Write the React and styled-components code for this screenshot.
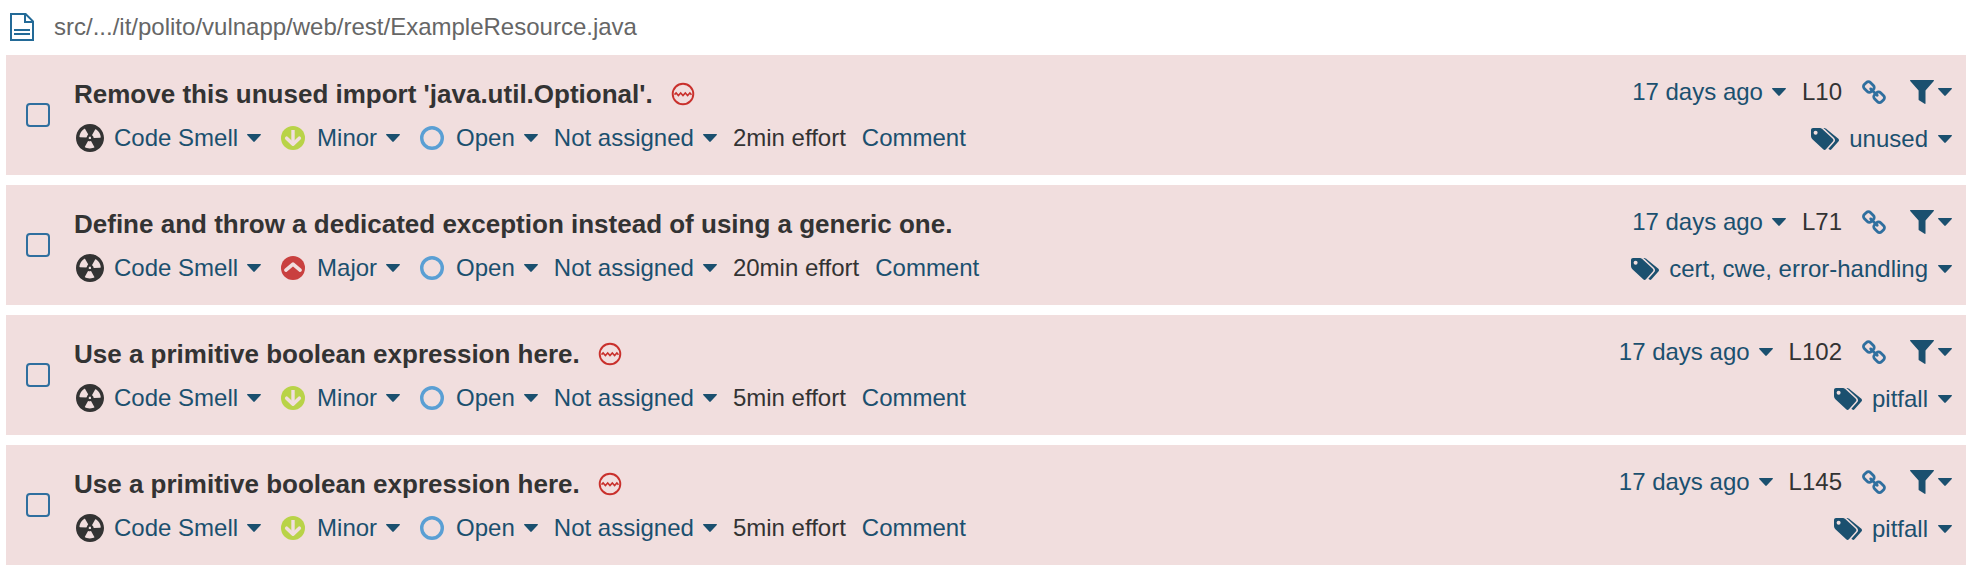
import React from "react";
import styled, { createGlobalStyle } from "styled-components";

const ink = "#333333";
const link = "#1b506f";
const blue = "#2f6f9f";
const rowBg = "#f1dede";

const GlobalStyle = createGlobalStyle`
  *, *::before, *::after { box-sizing: border-box; }
  body {
    margin: 0;
    background: #ffffff;
    color: ${ink};
    font-family: "Liberation Sans", Arial, sans-serif;
    font-size: 24px;
    line-height: 32px;
  }
`;

const Page = styled.main`
  padding: 0 6px 10px;
`;

const FileHeader = styled.header`
  display: flex;
  align-items: center;
  gap: 20px;
  height: 55px;
  padding: 0 4px 2px;
  color: #666666;
`;

const FilePath = styled.h1`
  margin: 0;
  font-size: 24px;
  font-weight: 400;
  line-height: 32px;
`;

const IssueList = styled.ul`
  display: flex;
  flex-direction: column;
  gap: 10px;
  margin: 0;
  padding: 0;
  list-style: none;
`;

const IssueRow = styled.li`
  display: flex;
  align-items: center;
  gap: 24px;
  padding: 20px 14px 20px 20px;
  background: ${rowBg};
`;

const Checkbox = styled.input`
  appearance: none;
  flex: none;
  width: 24px;
  height: 24px;
  margin: 0;
  border: 2px solid ${blue};
  border-radius: 4px;
  &:checked { background: ${blue}; }
`;

const Details = styled.div`
  display: flex;
  flex: 1;
  flex-direction: column;
  gap: 10px;
  min-width: 0;
`;

const TitleLine = styled.div`
  display: flex;
  align-items: center;
  gap: 18px;
`;

const Title = styled.h2`
  margin: 0;
  font-size: 26px;
  font-weight: 700;
  line-height: 36px;
`;

const MetaLine = styled.div`
  display: flex;
  align-items: center;
  gap: 16px;
  white-space: nowrap;
`;

const Aside = styled.div`
  display: flex;
  flex-direction: column;
  align-items: flex-end;
  gap: 15px;
  padding-top: 1px;
`;

const LinkButton = styled.button`
  display: flex;
  align-items: center;
  gap: ${({ $gap }) => $gap || 0}px;
  margin: 0;
  padding: 0;
  border: 0;
  background: none;
  color: ${link};
  font: inherit;
  cursor: pointer;
`;

const Permalink = styled.a`
  display: flex;
  margin: 0 8px 0 4px;
  color: ${blue};
`;

const IconSlot = styled.span`
  display: flex;
  align-items: center;
  justify-content: center;
  width: 32px;
  height: 32px;
  margin-right: -1px;
`;

const Svg = styled.svg`
  display: block;
  flex: none;
`;

const Caret = () => (
  <Svg width="14" height="8" viewBox="0 0 14 8" aria-hidden="true">
    <path d="M.7 0h12.6c.6 0 .9.6.5 1L7.7 7.6c-.4.4-1 .4-1.4 0L.2 1C-.2.6.1 0 .7 0z" fill={link} />
  </Svg>
);

const FileIcon = () => (
  <Svg width="24" height="28" viewBox="0 0 24 28" fill="none" stroke="#236a97" strokeWidth="2" aria-hidden="true">
    <path d="M1 1h14.6L23 8.400V27H1zM15 1v8h8M4 17h16M4 21h16" />
  </Svg>
);

const CodeSmellIcon = () => (
  <Svg width="28" height="28" viewBox="2 2 12 12" fill={ink} fillRule="evenodd" aria-hidden="true">
    <path d="M8 2C4.700 2 2 4.700 2 8s2.700 6 6 6 6-2.700 6-6-2.700-6-6-6zm-.5 5.500h.9v.9h-.9v-.9zm-3.800.2c-.1 0-.2-.1-.2-.2 0-.4.1-1.200.6-2S5.300 4.200 5.600 4c.2 0 .3 0 .3.1l1.300 2.300c0 .1 0 .2-.1.2-.1.2-.2.3-.3.5-.1.2-.2.4-.2.5 0 .1-.1.2-.2.2l-2.700-.1zM9.900 12c-.3.2-1.100.5-2 .5-.9 0-1.700-.3-2-.5-.1 0-.1-.2-.1-.3l1.300-2.300c0-.1.1-.1.2-.1.2.1.3.1.5.1s.4 0 .5-.1c.1 0 .2 0 .2.1l1.300 2.300c.2.2.2.3.1.3zm2.500-4.100L9.700 8c-.1 0-.2-.1-.2-.2 0-.2-.1-.4-.2-.5 0-.1-.2-.3-.3-.4-.1 0-.1-.1-.1-.2l1.300-2.300c.1-.1.2-.1.3-.1.3.2 1 .7 1.500 1.500s.6 1.600.6 2c0 0-.1.1-.2.1z" />
  </Svg>
);

const MinorIcon = () => (
  <Svg width="24" height="24" viewBox="0 0 24 24" fill="none" stroke={rowBg} aria-hidden="true">
    <circle cx="12" cy="12" r="12" fill="#b9d348" stroke="none" />
    <path d="M12 4v13" strokeWidth="3.400" />
    <path d="M5.700 12.200L12 18.200l6.300-6" strokeWidth="3.600" strokeLinecap="round" strokeLinejoin="round" />
  </Svg>
);

const MajorIcon = () => (
  <Svg width="24" height="24" viewBox="0 0 24 24" fill="none" aria-hidden="true">
    <circle cx="12" cy="12" r="12" fill="#c9403f" />
    <path d="M4.900 14.200L12 8.200l7.100 6" stroke={rowBg} strokeWidth="3.600" strokeLinecap="round" strokeLinejoin="round" />
  </Svg>
);

const OpenIcon = () => (
  <Svg width="24" height="24" viewBox="0 0 24 24" fill="none" aria-hidden="true">
    <circle cx="12" cy="12" r="10.300" stroke="#5a9fd4" strokeWidth="3.400" />
  </Svg>
);

const EngineIcon = () => (
  <Svg width="24" height="24" viewBox="0 0 24 24" fill="none" stroke="#c9302c" role="img" aria-label="Quick fix unavailable">
    <circle cx="12" cy="12" r="10.300" strokeWidth="1.900" />
    <path d="M3.500 12.600l1.600-1.600 2.300 2.600 2.300-2.600 2.300 2.600 2.300-2.600 2.300 2.600 2.300-2.600 1.600 1.800" strokeWidth="1.600" />
  </Svg>
);

const ChainIcon = () => (
  <Svg width="24" height="24" viewBox="0.600 0.600 14.700 14.700" fill="currentColor" aria-hidden="true">
    <path d="M13.501 11.429q0-0.357-0.250-0.607l-1.857-1.857q-0.250-0.250-0.607-0.250-0.375 0-0.643 0.286 0.027 0.027 0.170 0.165t0.192 0.192 0.134 0.170 0.116 0.228 0.031 0.246q0 0.357-0.250 0.607t-0.607 0.250q-0.134 0-0.246-0.031t-0.228-0.116-0.170-0.134-0.192-0.192-0.165-0.170q-0.295 0.277-0.295 0.652 0 0.357 0.250 0.607l1.839 1.848q0.241 0.241 0.607 0.241 0.357 0 0.607-0.232l1.313-1.304q0.250-0.250 0.250-0.598zM7.224 5.134q0-0.357-0.250-0.607l-1.839-1.848q-0.250-0.250-0.607-0.250-0.348 0-0.607 0.241l-1.313 1.304q-0.250 0.250-0.250 0.598 0 0.357 0.250 0.607l1.857 1.857q0.241 0.241 0.607 0.241 0.375 0 0.643-0.277-0.027-0.027-0.170-0.165t-0.192-0.192-0.134-0.170-0.116-0.228-0.031-0.246q0-0.357 0.250-0.607t0.607-0.250q0.134 0 0.246 0.031t0.228 0.116 0.170 0.134 0.192 0.192 0.165 0.170q0.295-0.277 0.295-0.652zM15.215 11.429q0 1.071-0.759 1.813l-1.313 1.304q-0.741 0.741-1.813 0.741-1.080 0-1.821-0.759l-1.839-1.848q-0.741-0.741-0.741-1.813 0-1.098 0.786-1.866l-0.786-0.786q-0.768 0.786-1.857 0.786-1.071 0-1.821-0.750l-1.857-1.857q-0.750-0.750-0.750-1.821t0.759-1.813l1.313-1.304q0.741-0.741 1.813-0.741 1.080 0 1.821 0.759l1.839 1.848q0.741 0.741 0.741 1.813 0 1.098-0.786 1.866l0.786 0.786q0.768-0.786 1.857-0.786 1.071 0 1.821 0.750l1.857 1.857q0.750 0.750 0.750 1.821z" />
  </Svg>
);

const FilterIcon = () => (
  <Svg width="24" height="24" viewBox="0 0 24 24" fill={link} aria-hidden="true">
    <path d="M.5 0h23c.5 0 .6.7.3 1.100L15.500 10.500V23.500c0 .5-.5.6-.9.3L9 20.300c-.3-.2-.4-.5-.4-.8v-9L.2 1.100C-.1.700 0 0 .5 0z" />
  </Svg>
);

const TagsIcon = () => (
  <Svg width="28" height="22" viewBox="0 0 28 22" fill={link} aria-hidden="true">
    <path d="M9 0h3.700c1.100 0 2.500.6 3.300 1.400l11.400 9.400c.8.8.8 1.900 0 2.700l-6.900 7.800c-.9.900-1.900.8-2.900-.2L9 12z" />
    <path
      stroke={rowBg}
      strokeWidth="3"
      d="M6 0h2.500c1.100 0 2.500.6 3.300 1.400l10 9.400c.8.8.8 1.900 0 2.700l-6.900 7.800c-.8.8-1.900.8-2.700 0L6 15z"
    />
    <path d="M0 2C0 .9.9 0 2 0h6.500c1.100 0 2.500.6 3.300 1.400l10 9.400c.8.8.8 1.900 0 2.700l-6.900 7.800c-.8.8-1.900.8-2.700 0L1.400 11.200C.6 10.400 0 9 0 7.900z" />
    <circle cx="4.600" cy="4.700" r="2" fill={rowBg} />
  </Svg>
);

const severityIcons = { Minor: MinorIcon, Major: MajorIcon };

const issues = [
  { line: 10, title: "Remove this unused import 'java.util.Optional'.", engine: true, severity: "Minor", effort: "2min", tags: "unused" },
  { line: 71, title: "Define and throw a dedicated exception instead of using a generic one.", engine: false, severity: "Major", effort: "20min", tags: "cert, cwe, error-handling" },
  { line: 102, title: "Use a primitive boolean expression here.", engine: true, severity: "Minor", effort: "5min", tags: "pitfall" },
  { line: 145, title: "Use a primitive boolean expression here.", engine: true, severity: "Minor", effort: "5min", tags: "pitfall" },
];

function Dropdown({ icon, gap = 9, children }) {
  return (
    <LinkButton type="button" $gap={gap}>
      {icon}
      {children}
      <Caret />
    </LinkButton>
  );
}

function Issue({ issue }) {
  const SeverityIcon = severityIcons[issue.severity];
  return (
    <IssueRow>
      <Checkbox type="checkbox" aria-label={`Select issue on line ${issue.line}`} />
      <Details>
        <TitleLine>
          <Title>{issue.title}</Title>
          {issue.engine && <EngineIcon />}
        </TitleLine>
        <MetaLine>
          <Dropdown icon={<IconSlot><CodeSmellIcon /></IconSlot>}>Code Smell</Dropdown>
          <Dropdown icon={<IconSlot><SeverityIcon /></IconSlot>}>{issue.severity}</Dropdown>
          <Dropdown icon={<IconSlot><OpenIcon /></IconSlot>}>Open</Dropdown>
          <Dropdown>Not assigned</Dropdown>
          <span>{issue.effort} effort</span>
          <LinkButton type="button">Comment</LinkButton>
        </MetaLine>
      </Details>
      <Aside>
        <MetaLine>
          <Dropdown>17 days ago</Dropdown>
          <span>L{issue.line}</span>
          <Permalink href={`#L${issue.line}`} aria-label="Permalink">
            <ChainIcon />
          </Permalink>
          <LinkButton type="button" $gap={4} aria-label="Filter similar issues">
            <FilterIcon />
            <Caret />
          </LinkButton>
        </MetaLine>
        <MetaLine>
          <Dropdown icon={<TagsIcon />} gap={10}>{issue.tags}</Dropdown>
        </MetaLine>
      </Aside>
    </IssueRow>
  );
}

export default function App() {
  return (
    <>
      <GlobalStyle />
      <Page>
        <FileHeader>
          <FileIcon />
          <FilePath>src/.../it/polito/vulnapp/web/rest/ExampleResource.java</FilePath>
        </FileHeader>
        <IssueList>
          {issues.map((issue) => (
            <Issue key={issue.line} issue={issue} />
          ))}
        </IssueList>
      </Page>
    </>
  );
}
